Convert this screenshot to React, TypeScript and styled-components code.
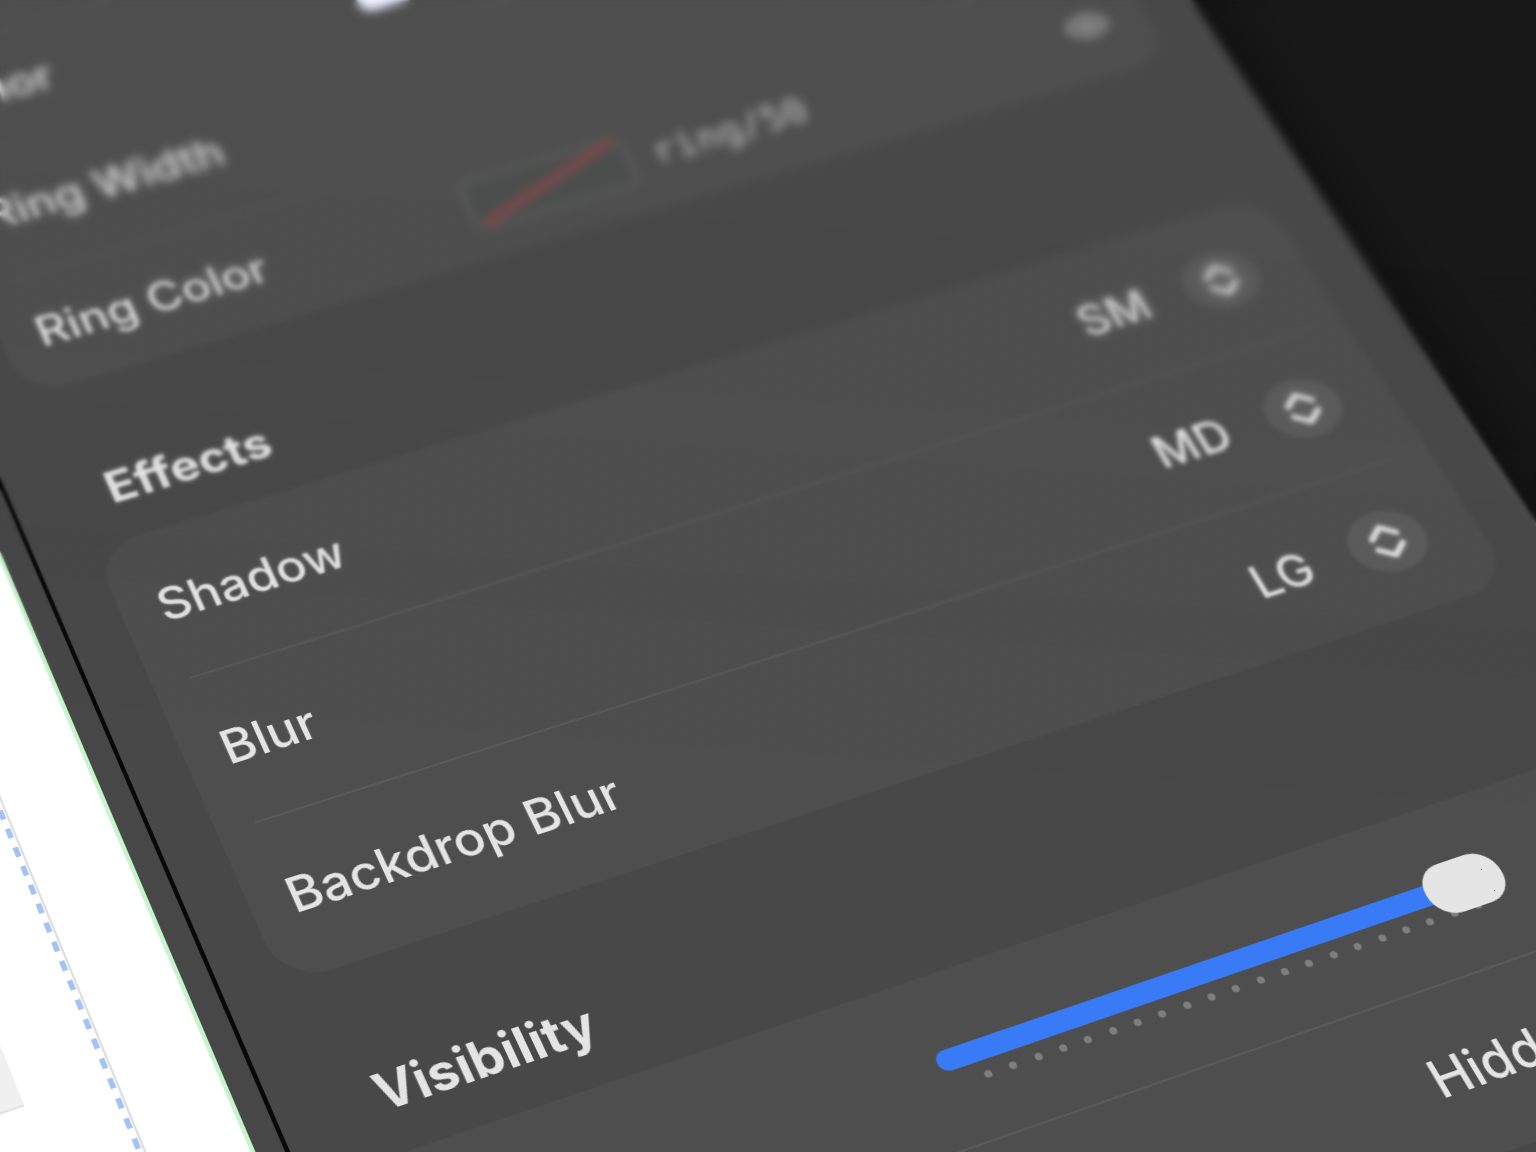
import React, { useId, useState } from "react";
import styled, { createGlobalStyle } from "styled-components";

const GlobalStyle = createGlobalStyle`
  *, *::before, *::after { box-sizing: border-box; }
  body {
    margin: 0;
    background: #181818;
    color: #e4e4e4;
    font-family: Inter, "Liberation Sans", sans-serif;
  }
`;

const Stage = styled.main`
  position: relative;
  height: 100vh;
  overflow: hidden;
`;

/* The whole desktop is one flat plane, seen by a tilted camera. */
const Plane = styled.div`
  display: flex;
  width: 1777px;
  height: 1900px;
  transform-origin: 0 0;
  transform: matrix3d(
      1.02445, -0.28278, 0, 0.00004961,
      0.36947, 0.79669, 0, -0.00013125,
      0, 0, 1, 0,
      190, 677, 0, 1
    )
    translate(-520px, -988px);
`;

const Canvas = styled.section`
  position: relative;
  z-index: 1;
  flex: none;
  display: flex;
  width: 402px;
  padding-right: 84px;
  background: #fff;
  border-right: 4px solid #c6f4cb;
`;

const Artboard = styled.div`
  flex: 1;
  border-right: 2px solid #dedede;
  padding-right: 82px;
  background: repeating-linear-gradient(#a3c2f7 0 10px, transparent 10px 20px) right 1px top 0 / 5px 100% no-repeat;
`;

const Placeholder = styled.div`
  height: 1340px;
  background: #f0f0f0;
  border-bottom: 2px solid #e2e2e2;
`;

const Gutter = styled.div`
  position: relative;
  z-index: 1;
  flex: none;
  width: 28px;
  background: #474747;
  border-right: 4px solid #080808;
`;

const Inspector = styled.aside`
  flex: 1;
  padding: 54px 51px 54px 54px;
  background: #484848;
  border-right: 3px solid #565656;
  box-shadow: 0 0 90px rgba(0, 0, 0, 0.6);
`;

const Heading = styled.h2`
  margin: 96px 36px 30px;
  font-size: 48px;
  line-height: 56px;
  font-weight: 700;
`;

const Card = styled.div`
  padding: 0 36px;
  border-radius: 46px;
  background: #4e4e4e;
`;

const Row = styled.div<{ $compact?: boolean }>`
  display: flex;
  align-items: center;
  height: ${(p) => (p.$compact ? 136 : 160)}px;
  font-size: 48px;
  line-height: 56px;
  font-weight: 500;
  & + & {
    border-top: 2px solid #595959;
  }
`;

const Label = styled.label`
  flex: 1;
`;

const ColorLabel = styled.span`
  width: 450px;
`;

const PickerBox = styled.div`
  display: flex;
  align-items: center;
  gap: 42px;
  margin-left: auto;
  padding-right: 14px;
`;

const Select = styled.select`
  appearance: none;
  width: 300px;
  padding: 0;
  border: 0;
  background: none;
  color: inherit;
  font: inherit;
  text-align-last: right;
`;

const Badge = styled.svg`
  width: 78px;
  height: 66px;
  border-radius: 50%;
  background: #5b5b5b;
`;

const Swatch = styled.button<{ $fill: string; $edge: string }>`
  display: block;
  width: 182px;
  height: 68px;
  padding: 0;
  border: 8px solid ${(p) => p.$edge};
  border-radius: 14px;
  background: ${(p) => p.$fill};
  svg {
    display: block;
    width: 100%;
    height: 100%;
    overflow: visible;
  }
`;

const Token = styled.span`
  flex: 1;
  padding-left: 22px;
  color: #c4c4c4;
  font-family: "DejaVu Sans Mono", monospace;
  font-size: 40px;
`;

const EyeButton = styled.button`
  padding: 0;
  border: 0;
  background: none;
  svg {
    display: block;
    width: 54px;
    height: 40px;
  }
`;

const SliderBox = styled.div`
  width: 562px;
  margin: 0 134px 0 auto;
  padding-top: 21px;
`;

const Slider = styled.input`
  display: block;
  appearance: none;
  width: 100%;
  height: 50px;
  margin: 0;
  background: none;
  position: relative;
  z-index: 1;
  &::-webkit-slider-runnable-track {
    height: 20px;
    border-radius: 10px;
    background: #397bf6;
  }
  &::-webkit-slider-thumb {
    appearance: none;
    width: 76px;
    height: 50px;
    margin-top: -15px;
    border-radius: 24px;
    background: #e5e5e5;
  }
`;

const Ticks = styled.div`
  display: flex;
  justify-content: space-between;
  margin: -5px 34px 0;
  height: 26px;
`;

const Tick = styled.i`
  width: 7px;
  height: 7px;
  border-radius: 50%;
  background: #7f7f7f;
`;

/* Depth of field: far parts of the plane fall out of focus. */
const Focus = styled.div<{ $depth: number; $blur: number }>`
  position: absolute;
  inset: 0;
  pointer-events: none;
  backdrop-filter: blur(${(p) => p.$blur}px);
  mask-image: linear-gradient(
    184deg,
    #000 ${(p) => p.$depth - 14}%,
    transparent ${(p) => p.$depth}%
  );
`;

function Picker({ id, label, value, options }: { id: string; label?: string; value: string; options: string[] }) {
  const [current, setCurrent] = useState(value);
  return (
    <PickerBox>
      <Select id={id} aria-label={label} value={current} onChange={(e) => setCurrent(e.target.value)}>
        {options.map((o) => (
          <option key={o}>{o}</option>
        ))}
      </Select>
      <Badge viewBox="0 0 78 66" fill="none" stroke="#dcdcdc" strokeWidth="6" strokeLinecap="round" strokeLinejoin="round" aria-hidden>
        <path d="M26 27 39 17 52 27M26 39 39 49 52 39" />
      </Badge>
    </PickerBox>
  );
}

function PickerRow({ label, value, options }: { label: string; value: string; options: string[] }) {
  const id = useId();
  return (
    <Row>
      <Label htmlFor={id}>{label}</Label>
      <Picker id={id} value={value} options={options} />
    </Row>
  );
}

const sizes = ["SM", "MD", "LG"];

export default function App() {
  const [opacity, setOpacity] = useState(100);
  return (
    <Stage>
      <GlobalStyle />
      <Plane>
        <Canvas>
          <Artboard>
            <Placeholder />
          </Artboard>
        </Canvas>
        <Gutter />
        <Inspector>
          <Card>
            <Row />
            <Row $compact>
              <ColorLabel>Color</ColorLabel>
              <Swatch $fill="#f0f4ff" $edge="#e6edff" aria-label="Color" />
            </Row>
            <PickerRow label="Ring Width" value="Default" options={["Default"]} />
            <Row $compact>
              <ColorLabel>Ring Color</ColorLabel>
              <Swatch $fill="#4b4e4c" $edge="#565656" aria-label="Ring Color">
                <svg viewBox="0 0 166 52" preserveAspectRatio="none" aria-hidden>
                  <path d="M4 51 164 -2" stroke="#7a4a4c" strokeWidth="11" />
                </svg>
              </Swatch>
              <Token>ring/50</Token>
              <EyeButton aria-label="Toggle Ring Color">
                <svg viewBox="0 0 54 40" fill="#7c7c7c" aria-hidden>
                  <path d="M1 20C8 8 17 3 27 3s19 5 26 17c-7 12-16 17-26 17S8 32 1 20Z" />
                  <circle cx="27" cy="20" r="10" fill="#858585" stroke="#6c6c6c" strokeWidth="3" />
                </svg>
              </EyeButton>
            </Row>
          </Card>

          <Heading>Effects</Heading>
          <Card>
            <PickerRow label="Shadow" value="SM" options={sizes} />
            <PickerRow label="Blur" value="MD" options={sizes} />
            <PickerRow label="Backdrop Blur" value="LG" options={sizes} />
          </Card>

          <Heading>Visibility</Heading>
          <Card>
            <Row>
              <SliderBox>
                <Slider
                  type="range"
                  aria-label="Opacity"
                  step={5}
                  value={opacity}
                  onChange={(e) => setOpacity(Number(e.target.value))}
                />
                <Ticks>
                  {Array.from({ length: 21 }, (_, i) => (
                    <Tick key={i} />
                  ))}
                </Ticks>
              </SliderBox>
            </Row>
            <Row>
              <Picker id="overflow" label="Overflow" value="Hidden" options={["Hidden"]} />
            </Row>
          </Card>
        </Inspector>
      </Plane>
      <Focus $depth={64} $blur={1} />
      <Focus $depth={54} $blur={2} />
      <Focus $depth={36} $blur={4} />
    </Stage>
  );
}
